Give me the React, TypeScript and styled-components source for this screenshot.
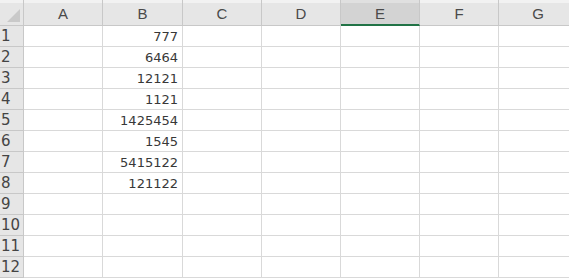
import React from 'react';
import styled, { createGlobalStyle } from 'styled-components';

const GlobalStyle = createGlobalStyle`
  html, body {
    margin: 0;
    padding: 0;
    background: #ffffff;
    overflow: hidden;
  }
`;

const columns = ['A', 'B', 'C', 'D', 'E', 'F', 'G'];
const selectedColumn = 'E';
const values: Record<number, string> = {
  1: '777',
  2: '6464',
  3: '12121',
  4: '1121',
  5: '1425454',
  6: '1545',
  7: '5415122',
  8: '121122',
};
const rows = Array.from({ length: 12 }, (_, i) => i + 1);

const Sheet = styled.div`
  display: grid;
  grid-template-columns: 24px 79px 80px 79px 79px 79px 79px 79px;
  grid-auto-rows: 21px;
  grid-template-rows: 26px;
  width: 569px;
  height: 279px;
  overflow: hidden;
  font-family: "DejaVu Sans", "Liberation Sans", sans-serif;
  font-size: 13px;
  color: #383838;
`;

const Corner = styled.div`
  position: relative;
  background: linear-gradient(#f2f2f2 0 3px, #e6e6e6 3px);
  border-right: 1px solid #c8c8c8;
  border-bottom: 1px solid #c8c8c8;
  svg {
    position: absolute;
    right: 3px;
    bottom: 3px;
  }
`;

const ColHeader = styled.div<{ $selected?: boolean }>`
  display: flex;
  align-items: center;
  justify-content: center;
  padding-top: 2px;
  box-sizing: border-box;
  background: ${(p) =>
    p.$selected
      ? 'linear-gradient(#e0e0e0 0 3px, #d3d3d3 3px)'
      : 'linear-gradient(#f2f2f2 0 3px, #e6e6e6 3px)'};
  border-right: 1px solid #c8c8c8;
  border-bottom: ${(p) => (p.$selected ? '2px solid #217346' : '1px solid #c8c8c8')};
  font-family: "Liberation Sans", sans-serif;
  font-size: 15px;
  color: #4a4a4a;
`;

const RowHeader = styled.div`
  display: flex;
  align-items: flex-end;
  padding: 0 0 1px 1px;
  box-sizing: border-box;
  background: #e6e6e6;
  border-right: 1px solid #c8c8c8;
  border-bottom: 1px solid #c8c8c8;
  font-size: 15px;
  color: #444444;
`;

const Cell = styled.div<{ $align?: 'left' | 'right' }>`
  display: flex;
  align-items: flex-end;
  justify-content: ${(p) => (p.$align === 'right' ? 'flex-end' : 'flex-start')};
  padding: 0 4px 2px 3px;
  box-sizing: border-box;
  border-right: 1px solid #d9d9d9;
  border-bottom: 1px solid #d9d9d9;
  white-space: nowrap;
`;

export default function App() {
  return (
    <>
      <GlobalStyle />
      <Sheet>
        <Corner>
          <svg width="13" height="13" viewBox="0 0 13 13">
            <polygon points="13,0 13,13 0,13" fill="#c9c9c9" />
          </svg>
        </Corner>
        {columns.map((c) => (
          <ColHeader key={c} $selected={c === selectedColumn}>
            {c}
          </ColHeader>
        ))}
        {rows.map((r) => (
          <React.Fragment key={r}>
            <RowHeader>{r}</RowHeader>
            {columns.map((c) => (
              <Cell key={c} $align={c === 'B' ? 'right' : 'left'}>
                {c === 'B' ? values[r] : ''}
              </Cell>
            ))}
          </React.Fragment>
        ))}
      </Sheet>
    </>
  );
}
